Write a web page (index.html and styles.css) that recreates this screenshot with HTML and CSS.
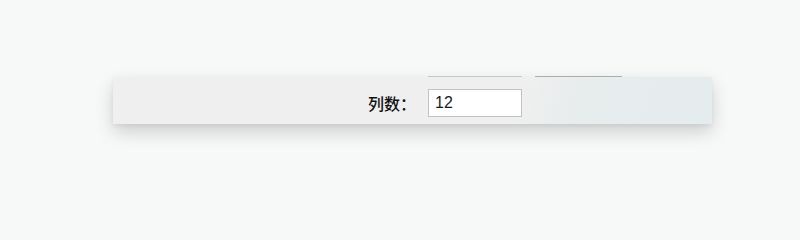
FILE: index.html
```html
<!DOCTYPE html>
<html lang="zh-CN">
<head>
<meta charset="utf-8">
<title>列数</title>
<link rel="stylesheet" href="styles.css">
</head>
<body>
<div class="stage">
  <div class="tabs">
    <div class="tab tab-a"></div>
    <div class="tab tab-b"></div>
  </div>
  <div class="bar">
    <label class="label" for="cols">列数：</label>
    <input class="field" id="cols" type="text" value="12">
  </div>
</div>
</body>
</html>
```

FILE: styles.css
```css
html, body {
  margin: 0;
  padding: 0;
}
body {
  background: #f7f9f9;
  width: 800px;
  height: 200px;
  overflow: hidden;
}
.stage {
  padding-top: 76px;
  padding-left: 113px;
}
.tabs {
  display: flex;
  height: 1px;
  padding-left: 315px;
  gap: 13px;
}
.tab {
  height: 1px;
}
.tab-a {
  width: 94px;
  background: #c6c8c8;
}
.tab-b {
  width: 87px;
  background: #a9adad;
}
.bar {
  width: 599px;
  height: 47px;
  box-sizing: border-box;
  padding: 12px 0 0 255px;
  display: flex;
  align-items: flex-start;
  background: linear-gradient(110deg, #efefef 0%, #efefef 67%, #e7eced 78%, #e5ecee 100%);
  box-shadow: 0 8px 18px rgba(0, 0, 0, 0.17), 0 2px 4px rgba(0, 0, 0, 0.05);
}
.label {
  font-family: "Noto Sans CJK SC", "Liberation Sans", sans-serif;
  font-size: 16px;
  font-weight: 500;
  line-height: 28px;
  color: #111;
  width: 60px;
}
.field {
  width: 94px;
  height: 28px;
  box-sizing: border-box;
  margin: 0;
  border: 1px solid #c2c2c2;
  padding: 0 6px;
  background: #fff;
  font-family: "Liberation Sans", Arial, sans-serif;
  font-size: 16px;
  color: #1a1a1a;
  outline: none;
}
```
